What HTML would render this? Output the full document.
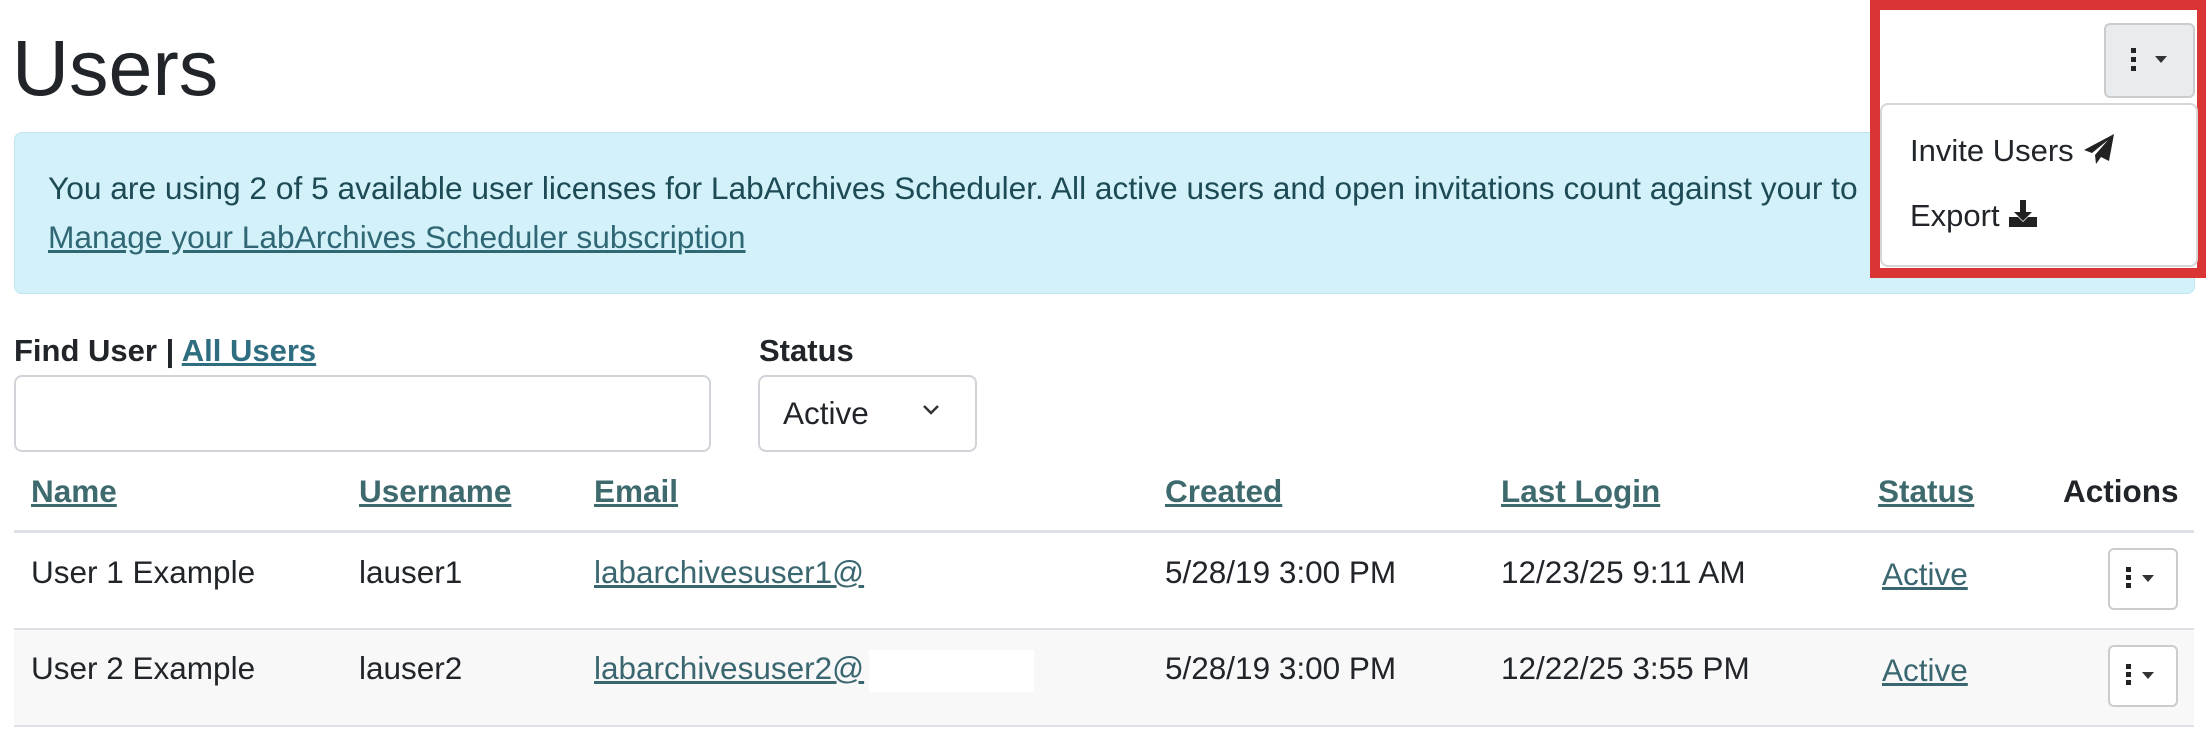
<!DOCTYPE html>
<html><head><meta charset="utf-8"><style>
body{margin:0;width:2206px;height:756px;background:#fff;font-family:"Liberation Sans",Arial,sans-serif;color:#212529;position:relative;overflow:hidden}
.a{position:absolute;white-space:nowrap}
a,.lk{color:#3a6670;text-decoration:underline}
.th{font-weight:bold;font-size:31.5px;color:#3e6a6e;text-decoration:underline}
.td{font-size:31.5px}
.btn{position:absolute;border:2px solid #ccc;border-radius:6px;background:#fff}
.dots{position:absolute;width:5px;height:5px;background:#222;box-shadow:0 9px 0 #222,0 18px 0 #222}
.car{position:absolute;width:0;height:0;border-left:6px solid transparent;border-right:6px solid transparent;border-top:7px solid #333}
</style></head><body>
<div class="a" style="left:12px;top:22px;font-size:79px;line-height:92px">Users</div>

<div class="a" style="left:14px;top:132px;width:2179px;height:160px;background:#d3f1f9;border:1px solid #bfe6f0;border-radius:8px"></div>
<div class="a" style="left:48px;top:170px;font-size:31.7px;color:#1c4a55">You are using 2 of 5 available user licenses for LabArchives Scheduler. All active users and open invitations count against your to</div>
<div class="a" style="left:48px;top:219px;font-size:31.7px;color:#2f6775;text-decoration:underline">Manage your LabArchives Scheduler subscription</div>

<!-- red box & dropdown -->
<div class="a" style="left:1870px;top:0;width:317px;height:258px;border:10px solid #d93535;background:#fff"></div>
<div class="btn" style="left:2104px;top:23px;width:87px;height:71px;background:#e9ecef"></div>
<div class="dots" style="left:2131px;top:48px"></div>
<div class="car" style="left:2155px;top:56px"></div>
<div class="a" style="left:1880px;top:103px;width:314px;height:160px;border:2px solid #d6d6d6;border-radius:8px;background:#fff"></div>
<div class="a" style="left:1910px;top:133px;font-size:31px">Invite Users
<svg width="34" height="32" viewBox="0 0 32 32" style="vertical-align:-4px"><path d="M31 1 L1 17 L9 20 L25 7 L12 22 L13 31 L18 24 L26 28 Z" fill="#222"/></svg></div>
<div class="a" style="left:1910px;top:198px;font-size:31px">Export
<svg width="30" height="30" viewBox="0 0 30 30" style="vertical-align:-3px"><path d="M12 1h6v12h6l-9 9-9-9h6z M1 18h9l5 5 5-5h9v10H1z" fill="#222"/></svg></div>

<!-- filters -->
<div class="a" style="left:14px;top:333px;font-size:31px;font-weight:bold">Find User | <span style="color:#2f6e80;text-decoration:underline">All Users</span></div>
<div class="a" style="left:759px;top:333px;font-size:31px;font-weight:bold">Status</div>
<div class="a" style="left:14px;top:375px;width:693px;height:73px;border:2px solid #d0d4d8;border-radius:8px"></div>
<div class="a" style="left:758px;top:375px;width:215px;height:73px;border:2px solid #d0d4d8;border-radius:8px"></div>
<div class="a" style="left:783px;top:395px;font-size:31.5px">Active</div>
<svg class="a" style="left:922px;top:404px" width="18" height="12" viewBox="0 0 18 12"><path d="M2 2l7 7 7-7" stroke="#333" stroke-width="2.5" fill="none"/></svg>

<!-- table -->
<div class="a th" style="left:31px;top:473px">Name</div>
<div class="a th" style="left:359px;top:473px">Username</div>
<div class="a th" style="left:594px;top:473px">Email</div>
<div class="a th" style="left:1165px;top:473px">Created</div>
<div class="a th" style="left:1501px;top:473px">Last Login</div>
<div class="a th" style="left:1878px;top:473px">Status</div>
<div class="a" style="left:2063px;top:473px;font-size:31.5px;font-weight:bold">Actions</div>
<div class="a" style="left:14px;top:530px;width:2180px;height:3px;background:#dee2e6"></div>
<div class="a" style="left:14px;top:628px;width:2180px;height:95px;background:#f8f8f8;border-top:2px solid #dee2e6;border-bottom:2px solid #dee2e6"></div>

<div class="a td" style="left:31px;top:554px">User 1 Example</div>
<div class="a td" style="left:359px;top:554px">lauser1</div>
<div class="a td lk" style="left:594px;top:554px">labarchivesuser1@</div>
<div class="a td" style="left:1165px;top:554px">5/28/19 3:00 PM</div>
<div class="a td" style="left:1501px;top:554px">12/23/25 9:11 AM</div>
<div class="a td lk" style="left:1882px;top:556px">Active</div>
<div class="btn" style="left:2108px;top:548px;width:66px;height:58px"></div>
<div class="dots" style="left:2126px;top:567px;width:5px;height:5px;box-shadow:0 8px 0 #222,0 16px 0 #222"></div>
<div class="car" style="left:2142px;top:575px;border-left-width:6px;border-right-width:6px;border-top-width:7px"></div>

<div class="a td" style="left:31px;top:650px">User 2 Example</div>
<div class="a td" style="left:359px;top:650px">lauser2</div>
<div class="a td lk" style="left:594px;top:650px">labarchivesuser2@</div>
<div class="a" style="left:869px;top:650px;width:165px;height:42px;background:#fff"></div>
<div class="a td" style="left:1165px;top:650px">5/28/19 3:00 PM</div>
<div class="a td" style="left:1501px;top:650px">12/22/25 3:55 PM</div>
<div class="a td lk" style="left:1882px;top:652px">Active</div>
<div class="btn" style="left:2108px;top:645px;width:66px;height:58px"></div>
<div class="dots" style="left:2126px;top:664px;width:5px;height:5px;box-shadow:0 8px 0 #222,0 16px 0 #222"></div>
<div class="car" style="left:2142px;top:672px;border-left-width:6px;border-right-width:6px;border-top-width:7px"></div>
</body></html>
